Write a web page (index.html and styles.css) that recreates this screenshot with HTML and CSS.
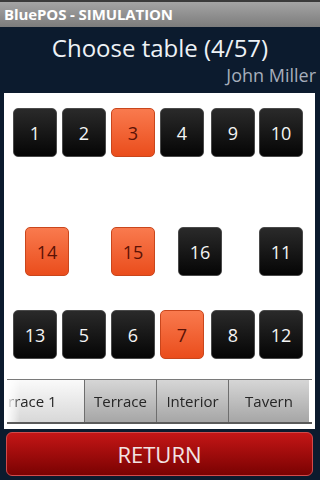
FILE: index.html
```html
<!DOCTYPE html>
<html>
<head>
<meta charset="utf-8">
<link rel="stylesheet" href="styles.css">
</head>
<body>
<div class="titlebar">BluePOS - SIMULATION</div>
<div class="header">
  <h1 class="title">Choose table (4/57)</h1>
  <div class="user">John Miller</div>
</div>
<div class="panel">
  <div class="floor">
    <div class="tbl" style="left:9px;top:15px">1</div>
    <div class="tbl" style="left:58px;top:15px">2</div>
    <div class="tbl busy" style="left:107px;top:15px">3</div>
    <div class="tbl" style="left:156px;top:15px">4</div>
    <div class="tbl" style="left:207px;top:15px">9</div>
    <div class="tbl" style="left:255px;top:15px">10</div>

    <div class="tbl busy" style="left:21px;top:134px">14</div>
    <div class="tbl busy" style="left:107px;top:134px">15</div>
    <div class="tbl" style="left:174px;top:134px">16</div>
    <div class="tbl" style="left:255px;top:134px">11</div>

    <div class="tbl" style="left:9px;top:217px">13</div>
    <div class="tbl" style="left:58px;top:217px">5</div>
    <div class="tbl" style="left:107px;top:217px">6</div>
    <div class="tbl busy" style="left:156px;top:217px">7</div>
    <div class="tbl" style="left:207px;top:217px">8</div>
    <div class="tbl" style="left:255px;top:217px">12</div>
  </div>
  <div class="tabs">
    <div class="tabrow">
      <div class="tab sel first">Terrace 1</div>
      <div class="tab">Terrace</div>
      <div class="tab">Interior</div>
      <div class="tab last">Tavern</div>
    </div>
  </div>
</div>
<div class="btnwrap"><div class="returnbtn">RETURN</div></div>
</body>
</html>
```
FILE: styles.css
```css
html, body {
  margin: 0;
  padding: 0;
}
body {
  width: 320px;
  height: 480px;
  background: #0c1b2e;
  font-family: "Open Sans", "Noto Sans", sans-serif;
  overflow: hidden;
}
.titlebar {
  height: 27px;
  box-sizing: border-box;
  border-top: 2px solid #3a3a3a;
  background: linear-gradient(#a4a4a4, #7c7c7c);
  color: #fff;
  font-weight: bold;
  font-size: 15px;
  line-height: 25px;
  padding-left: 4px;
  letter-spacing: -0.1px;
}
.header {
  height: 66px;
  display: flex;
  flex-direction: column;
}
.title {
  margin: 0;
  font-weight: normal;
  font-size: 24px;
  color: #eef2f6;
  text-align: center;
  line-height: 28px;
  padding-top: 7px;
}
.user {
  text-align: right;
  color: #a6aebb;
  font-size: 18px;
  line-height: 22px;
  padding-right: 4px;
  margin-top: 2px;
}
.panel {
  margin: 0 5px 0 4px;
  height: 336px;
  background: #fff;
  display: flex;
  flex-direction: column;
}
.floor {
  position: relative;
  height: 286px;
}
.tbl {
  position: absolute;
  width: 44px;
  height: 49px;
  box-sizing: border-box;
  border-radius: 5px;
  border: 1px solid #4a4a4a;
  background: linear-gradient(#2a2a2a, #050505);
  color: #f4f4f4;
  font-size: 18px;
  display: flex;
  align-items: center;
  justify-content: center;
}
.tbl.busy {
  border-color: #c9461c;
  background: linear-gradient(#f97a4e, #ea4d1c);
  color: #5a1206;
}
.tabs {
  margin: 0 3px 0 3px;
  height: 45px;
  box-sizing: border-box;
  border-top: 1px solid #7a7a7a;
  border-bottom: 2px solid #5a5a5a;
  overflow: hidden;
}
.tabrow {
  display: flex;
  height: 100%;
  margin-left: -43px;
  -webkit-mask-image: linear-gradient(to right, rgba(0,0,0,0.05) 43px, rgba(0,0,0,0.6) 51px, #000 56px);
  mask-image: linear-gradient(to right, rgba(0,0,0,0.05) 43px, rgba(0,0,0,0.6) 51px, #000 56px);
}
.tab {
  flex: none;
  width: 72px;
  box-sizing: border-box;
  border-right: 1px solid #6e6e6e;
  background: linear-gradient(#d6d6d6, #a6a6a6);
  color: #262626;
  font-size: 15px;
  display: flex;
  align-items: center;
  justify-content: center;
}
.tab.first {
  width: 121px;
}
.tab.sel {
  background: linear-gradient(#fafafa, #d8d8d8);
}
.tab.last {
  width: 80px;
  border-right: none;
}
.btnwrap {
  padding: 3px 7px 0 6px;
}
.returnbtn {
  height: 44px;
  box-sizing: border-box;
  border-radius: 6px;
  border: 1px solid #d24a4a;
  background: linear-gradient(#c41616, #7a0202);
  color: #f2e4e4;
  font-size: 22px;
  display: flex;
  align-items: center;
  justify-content: center;
}
```
